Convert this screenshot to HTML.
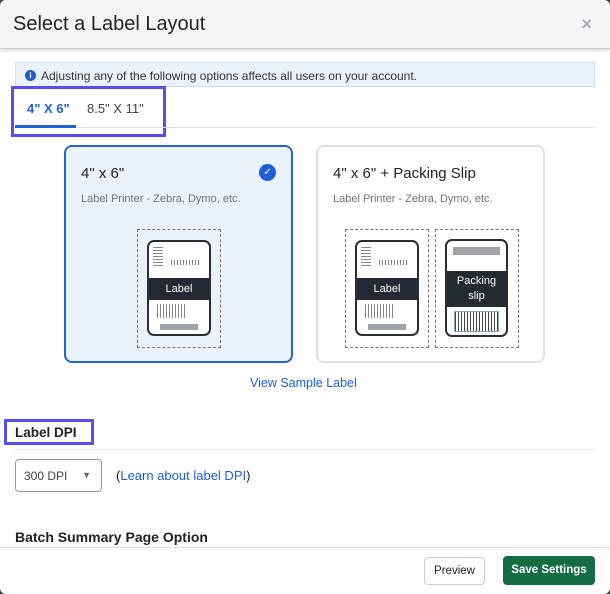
<!DOCTYPE html>
<html><head><style>
*{box-sizing:border-box;margin:0;padding:0}
body{width:610px;height:594px;background:#3a3f44;font-family:"Liberation Sans",Arial,sans-serif;position:relative;overflow:hidden}
.m{position:absolute;left:0;top:0;width:610px;height:594px;background:#fff;border-radius:6px;overflow:hidden}
.hd{position:absolute;left:0;top:0;width:610px;height:49px;background:#f4f5f7;border-bottom:1px solid #ccc;box-shadow:0 2px 3px rgba(0,0,0,.15)}
.hd h1{position:absolute;left:13px;top:13px;font-size:20px;font-weight:normal;color:#1f2328}
.x{position:absolute;right:18px;top:14px;font-size:18px;color:#aab;font-weight:bold}
.a{position:absolute}
.info{left:15px;top:62px;width:580px;height:25px;background:#eaf3fb;border:1px solid #c6e0f5;font-size:12px;color:#333;padding:6px 0 0 25px}
.info i{position:absolute;left:9px;top:7px;width:11px;height:11px;border-radius:50%;background:#1a5fc8;color:#fff;font-size:8px;font-style:normal;text-align:center;line-height:11px;font-weight:bold}
.pb{border:3px solid #5b4cf0}
.card{top:145px;width:229px;height:218px;border-radius:8px}
.c1{left:64px;background:#eaf3fc;border:2px solid #2a62d6}
.c2{left:316px;background:#fff;border:2px solid #dde1e5}
.t{position:absolute;left:15px;top:18px;font-size:15px;color:#222}
.s{position:absolute;left:15px;top:46px;font-size:11px;color:#6b737c}
.dash{border:1px dashed #777}
.ph{position:absolute;border:2px solid #2b2f33;border-radius:7px;background:#fff;overflow:hidden}
.band{position:absolute;left:-2px;right:-2px;background:#232a31;color:#fff;font-size:11px;text-align:center}
.bc{position:absolute;background:repeating-linear-gradient(90deg,#888 0 1px,transparent 1px 3px)}
.bv{position:absolute;background:repeating-linear-gradient(0deg,#888 0 1px,transparent 1px 3px)}
</style></head><body><div class="m">
<div class="hd"><h1>Select a Label Layout</h1><span class="x">×</span></div>
<div class="a info"><i>i</i>Adjusting any of the following options affects all users on your account.</div>
<div class="a pb" style="left:11px;top:86px;width:155px;height:51px"></div>
<div class="a" style="left:27px;top:101px;font-size:13px;color:#1f5fd6;font-weight:bold">4" X 6"</div>
<div class="a" style="left:87px;top:101px;font-size:13px;color:#444">8.5" X 11"</div>
<div class="a" style="left:15px;top:125px;width:61px;height:3px;background:#1f5fd6"></div>
<div class="a" style="left:76px;top:127px;width:519px;height:1px;background:#dde1e5"></div>

<div class="a card c1"><div class="t">4" x 6"</div><div class="s">Label Printer - Zebra, Dymo, etc.</div>
<div style="position:absolute;right:15px;top:17px;width:17px;height:17px;border-radius:50%;background:#1f5fd6;color:#fff;font-size:10px;text-align:center;line-height:17px">✓</div>
<div class="a dash" style="left:71px;top:82px;width:84px;height:119px"></div>
<div class="ph" style="left:81px;top:93px;width:64px;height:96px">
<div class="bv" style="left:4px;top:4px;width:10px;height:20px"></div>
<div class="bc" style="left:22px;top:18px;width:28px;height:5px"></div>
<div class="band" style="top:36px;height:22px;line-height:22px">Label</div>
<div class="bc" style="left:8px;top:62px;width:30px;height:14px"></div>
<div style="position:absolute;left:11px;bottom:4px;width:38px;height:6px;background:#a0a4a8"></div></div>
</div>
<div class="a card c2"><div class="t">4" x 6" + Packing Slip</div><div class="s">Label Printer - Zebra, Dymo, etc.</div>
<div class="a dash" style="left:27px;top:82px;width:84px;height:119px"></div>
<div class="a dash" style="left:117px;top:82px;width:84px;height:119px"></div>
<div class="ph" style="left:37px;top:93px;width:64px;height:96px">
<div class="bv" style="left:4px;top:4px;width:10px;height:20px"></div>
<div class="bc" style="left:22px;top:18px;width:28px;height:5px"></div>
<div class="band" style="top:36px;height:22px;line-height:22px">Label</div>
<div class="bc" style="left:8px;top:62px;width:30px;height:14px"></div>
<div style="position:absolute;left:11px;bottom:4px;width:38px;height:6px;background:#a0a4a8"></div></div>
<div class="ph" style="left:127px;top:92px;width:63px;height:98px"><div style="position:absolute;left:6px;top:6px;width:47px;height:8px;background:#a0a4a8"></div>
<div class="band" style="top:30px;height:36px;line-height:15px;padding-top:3px;font-size:11px">Packing<br>slip</div>
<div style="position:absolute;left:7px;top:70px;width:45px;height:21px;border:1px solid #8ab;background:repeating-linear-gradient(90deg,#444 0 1px,#fff 1px 3px)"></div></div>
</div>

<div class="a" style="left:250px;top:376px;font-size:12.5px;color:#1f5fd6">View Sample Label</div>
<div class="a pb" style="left:4px;top:419px;width:90px;height:26px"></div>
<div class="a" style="left:15px;top:425px;font-size:13.5px;font-weight:bold;color:#222">Label DPI</div>
<div class="a" style="left:15px;top:449px;width:580px;height:1px;background:#e2e5e8"></div>
<div class="a" style="left:15px;top:459px;width:87px;height:33px;border:1px solid #999;border-radius:4px;font-size:12px;color:#444;padding:9px 0 0 8px">300 DPI <span style="position:absolute;right:10px;top:10px;font-size:9px;color:#666">▼</span></div>
<div class="a" style="left:116px;top:468px;font-size:13px;color:#222">(<span style="color:#1f5fd6">Learn about label DPI</span>)</div>
<div class="a" style="left:15px;top:529px;font-size:14px;font-weight:bold;color:#222">Batch Summary Page Option</div>
<div class="a" style="left:0;top:547px;width:610px;height:1px;background:#dde1e5"></div>
<div class="a" style="left:424px;top:557px;width:61px;height:28px;border:1px solid #ccd;border-radius:4px;font-size:11.5px;color:#222;text-align:center;padding-top:7px">Preview</div>
<div class="a" style="left:503px;top:556px;width:92px;height:29px;background:#146c43;border-radius:4px;font-size:11.5px;color:#fff;font-weight:bold;text-align:center;padding-top:8px">Save Settings</div>
</div></body></html>
